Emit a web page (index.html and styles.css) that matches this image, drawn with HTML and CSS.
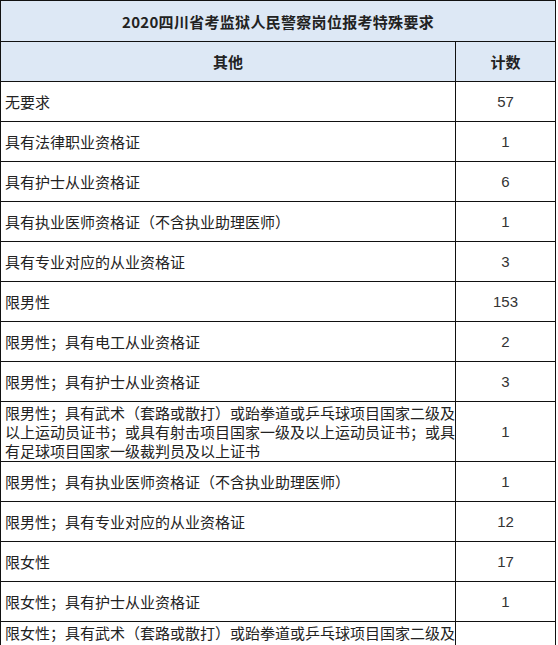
FILE: index.html
```html
<!DOCTYPE html>
<html lang="zh-CN">
<head>
<meta charset="utf-8">
<title>2020四川省考监狱人民警察岗位报考特殊要求</title>
<link rel="stylesheet" href="styles.css">
</head>
<body>
<table class="sheet">
  <colgroup><col class="col-name"><col class="col-count"></colgroup>
  <tr class="row-title"><th colspan="2">2020四川省考监狱人民警察岗位报考特殊要求</th></tr>
  <tr class="row-head"><th>其他</th><th>计数</th></tr>
  <tr><td>无要求</td><td class="num">57</td></tr>
  <tr><td>具有法律职业资格证</td><td class="num">1</td></tr>
  <tr><td>具有护士从业资格证</td><td class="num">6</td></tr>
  <tr><td>具有执业医师资格证（不含执业助理医师）</td><td class="num">1</td></tr>
  <tr><td>具有专业对应的从业资格证</td><td class="num">3</td></tr>
  <tr><td>限男性</td><td class="num">153</td></tr>
  <tr><td>限男性；具有电工从业资格证</td><td class="num">2</td></tr>
  <tr><td>限男性；具有护士从业资格证</td><td class="num">3</td></tr>
  <tr class="tall"><td>限男性；具有武术（套路或散打）或跆拳道或乒乓球项目国家二级及以上运动员证书；或具有射击项目国家一级及以上运动员证书；或具有足球项目国家一级裁判员及以上证书</td><td class="num">1</td></tr>
  <tr><td>限男性；具有执业医师资格证（不含执业助理医师）</td><td class="num">1</td></tr>
  <tr><td>限男性；具有专业对应的从业资格证</td><td class="num">12</td></tr>
  <tr><td>限女性</td><td class="num">17</td></tr>
  <tr><td>限女性；具有护士从业资格证</td><td class="num">1</td></tr>
  <tr class="tall"><td>限女性；具有武术（套路或散打）或跆拳道或乒乓球项目国家二级及以上运动员证书；或具有射击项目国家一级及以上运动员证书；或具有足球项目国家一级裁判员及以上证书</td><td class="num">1</td></tr>
</table>
</body>
</html>
```

FILE: styles.css
```css
html, body {
  margin: 0;
  padding: 0;
  background: #ffffff;
}

.sheet {
  border-collapse: collapse;
  table-layout: fixed;
  width: 555px;
  font-family: "Noto Sans CJK SC", "Liberation Sans", sans-serif;
  font-size: 15px;
  color: #222222;
}

.col-name { width: 455px; }
.col-count { width: 100px; }

.sheet th,
.sheet td {
  border: 1px solid #111111;
  padding: 0 0 0 4px;
  height: 39px;
  line-height: 19px;
  vertical-align: middle;
  text-align: left;
  font-weight: normal;
  word-break: break-all;
}

.row-title th {
  background: #dde8f5;
  text-align: center;
  font-weight: bold;
  padding: 0;
  height: 40px;
  letter-spacing: 0.3px;
}

.row-head th {
  background: #dde8f5;
  text-align: center;
  font-weight: bold;
  padding: 0;
}

.sheet td.num {
  text-align: center;
  padding: 0;
  font-family: "Liberation Sans", "Noto Sans CJK SC", sans-serif;
  color: #333333;
}

.tall td {
  height: 59px;
}
```
